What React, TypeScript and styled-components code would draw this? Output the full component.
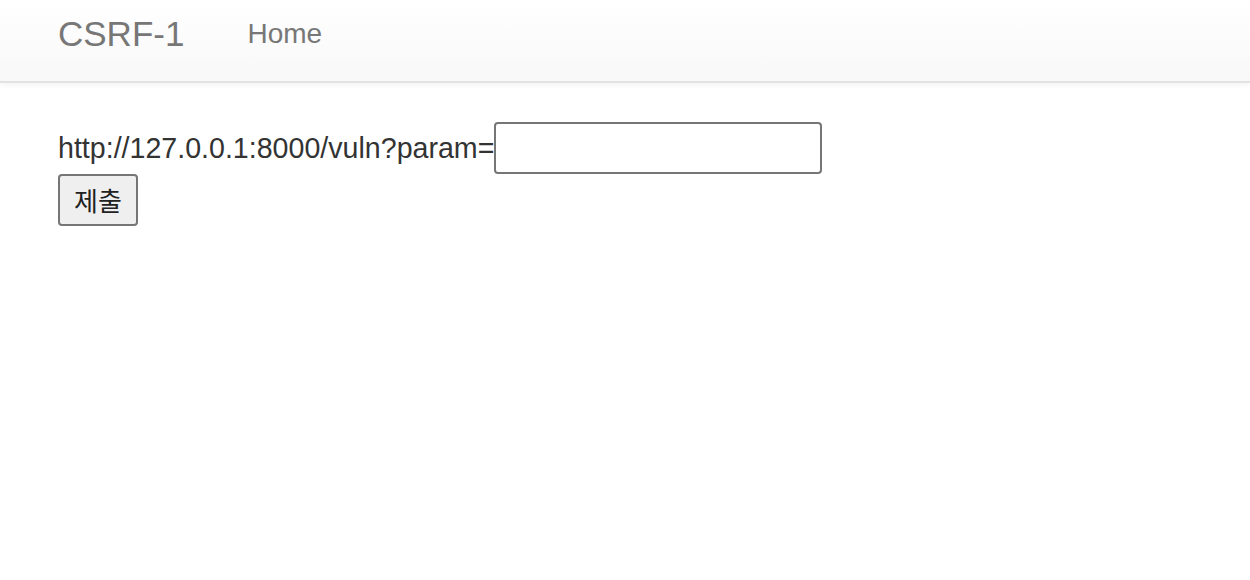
import React from "react";
import styled, { createGlobalStyle } from "styled-components";

const GlobalStyle = createGlobalStyle`
  html, body {
    margin: 0;
    padding: 0;
    background: #ffffff;
  }
  body {
    font-family: "Liberation Sans", Arial, "Noto Sans CJK KR", sans-serif;
    color: #333333;
  }
`;

const Navbar = styled.nav`
  display: flex;
  flex-direction: row;
  align-items: center;
  height: 67px;
  padding: 0 58px 14px;
  background: linear-gradient(to bottom, #ffffff 0%, #f8f8f8 100%);
  border-bottom: 2px solid #e3e3e3;
  box-shadow: 0 2px 6px rgba(0, 0, 0, 0.05);
`;

const Brand = styled.a`
  font-size: 35px;
  line-height: 1;
  color: #777777;
  text-decoration: none;
`;

const NavLink = styled.a`
  font-size: 28px;
  line-height: 1;
  color: #777777;
  text-decoration: none;
  margin-left: 63px;
`;

const Content = styled.main`
  padding: 39px 58px;
`;

const Form = styled.form`
  display: flex;
  flex-direction: column;
  align-items: flex-start;
`;

const FieldRow = styled.div`
  display: flex;
  flex-direction: row;
  align-items: center;
`;

const Label = styled.label`
  font-size: 28.6px;
  line-height: 1;
  color: #333333;
`;

const TextInput = styled.input`
  box-sizing: border-box;
  width: 328px;
  height: 52px;
  margin: 0;
  padding: 2px 6px;
  border: 2px solid #767676;
  border-radius: 4px;
  background: #ffffff;
  font-size: 28px;
  outline: none;
`;

const SubmitButton = styled.button`
  box-sizing: border-box;
  width: 80px;
  height: 52px;
  margin: 0;
  padding: 0 12px;
  border: 2px solid #767676;
  border-radius: 4px;
  background: #efefef;
  color: #222222;
  font-family: "Noto Sans CJK KR", "Liberation Sans", sans-serif;
  font-size: 26px;
  line-height: 1;
`;

const App = () => {
  return (
    <>
      <GlobalStyle />
      <Navbar>
        <Brand href="#">CSRF-1</Brand>
        <NavLink href="#">Home</NavLink>
      </Navbar>
      <Content>
        <Form onSubmit={(e) => e.preventDefault()}>
          <FieldRow>
            <Label htmlFor="param">http://127.0.0.1:8000/vuln?param=</Label>
            <TextInput id="param" type="text" />
          </FieldRow>
          <SubmitButton type="submit">제출</SubmitButton>
        </Form>
      </Content>
    </>
  );
};

export default App;
